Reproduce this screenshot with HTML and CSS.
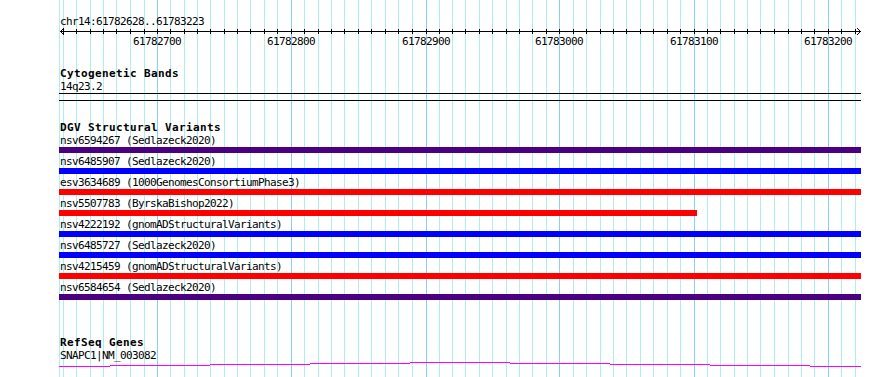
FILE: index.html
```html
<!DOCTYPE html>
<html>
<head>
<meta charset="utf-8">
<title>GBrowse region</title>
<link rel="stylesheet" href="styles.css">
</head>
<body>
<div class="panel">
  <svg class="grid" width="890" height="377" viewBox="0 0 890 377" shape-rendering="crispEdges">
    <g class="minor">
      <rect x="59" y="0" width="1" height="377"/>
      <rect x="63" y="0" width="1" height="377"/><rect x="76" y="0" width="1" height="377"/><rect x="90" y="0" width="1" height="377"/><rect x="103" y="0" width="1" height="377"/><rect x="116" y="0" width="1" height="377"/><rect x="130" y="0" width="1" height="377"/><rect x="144" y="0" width="1" height="377"/>
      <rect x="170" y="0" width="1" height="377"/><rect x="184" y="0" width="1" height="377"/><rect x="197" y="0" width="1" height="377"/><rect x="210" y="0" width="1" height="377"/><rect x="224" y="0" width="1" height="377"/><rect x="237" y="0" width="1" height="377"/><rect x="250" y="0" width="1" height="377"/><rect x="264" y="0" width="1" height="377"/><rect x="277" y="0" width="1" height="377"/>
      <rect x="304" y="0" width="1" height="377"/><rect x="318" y="0" width="1" height="377"/><rect x="331" y="0" width="1" height="377"/><rect x="344" y="0" width="1" height="377"/><rect x="358" y="0" width="1" height="377"/><rect x="371" y="0" width="1" height="377"/><rect x="385" y="0" width="1" height="377"/><rect x="398" y="0" width="1" height="377"/><rect x="412" y="0" width="1" height="377"/>
      <rect x="439" y="0" width="1" height="377"/><rect x="452" y="0" width="1" height="377"/><rect x="465" y="0" width="1" height="377"/><rect x="479" y="0" width="1" height="377"/><rect x="492" y="0" width="1" height="377"/><rect x="506" y="0" width="1" height="377"/><rect x="519" y="0" width="1" height="377"/><rect x="532" y="0" width="1" height="377"/><rect x="546" y="0" width="1" height="377"/>
      <rect x="573" y="0" width="1" height="377"/><rect x="586" y="0" width="1" height="377"/><rect x="600" y="0" width="1" height="377"/><rect x="613" y="0" width="1" height="377"/><rect x="626" y="0" width="1" height="377"/><rect x="640" y="0" width="1" height="377"/><rect x="653" y="0" width="1" height="377"/><rect x="667" y="0" width="1" height="377"/><rect x="680" y="0" width="1" height="377"/>
      <rect x="707" y="0" width="1" height="377"/><rect x="720" y="0" width="1" height="377"/><rect x="734" y="0" width="1" height="377"/><rect x="747" y="0" width="1" height="377"/><rect x="760" y="0" width="1" height="377"/><rect x="774" y="0" width="1" height="377"/><rect x="788" y="0" width="1" height="377"/><rect x="801" y="0" width="1" height="377"/><rect x="814" y="0" width="1" height="377"/>
      <rect x="841" y="0" width="1" height="377"/><rect x="855" y="0" width="1" height="377"/>
    </g>
    <g class="major">
      <rect x="157" y="0" width="1" height="377"/><rect x="291" y="0" width="1" height="377"/><rect x="426" y="0" width="1" height="377"/><rect x="559" y="0" width="1" height="377"/><rect x="694" y="0" width="1" height="377"/><rect x="828" y="0" width="1" height="377"/>
    </g>
  </svg>

  <div class="tracks">
    <section class="ruler">
      <div class="label">chr14:61782628..61783223</div>
      <svg class="axis" width="802" height="7" viewBox="0 0 802 7" shape-rendering="crispEdges">
        <rect x="1" y="3" width="801" height="1"/>
        <rect x="2" y="2" width="1" height="1"/><rect x="3" y="1" width="1" height="1"/><rect x="4" y="0" width="1" height="1"/>
        <rect x="2" y="4" width="1" height="1"/><rect x="3" y="5" width="1" height="1"/><rect x="4" y="6" width="1" height="1"/>
        <rect x="800" y="2" width="1" height="1"/><rect x="799" y="1" width="1" height="1"/><rect x="798" y="0" width="1" height="1"/>
        <rect x="800" y="4" width="1" height="1"/><rect x="799" y="5" width="1" height="1"/><rect x="798" y="6" width="1" height="1"/>
        <g class="ticks">
          <rect x="4" y="1" width="1" height="5"/><rect x="17" y="1" width="1" height="5"/><rect x="31" y="1" width="1" height="5"/><rect x="44" y="1" width="1" height="5"/><rect x="57" y="1" width="1" height="5"/><rect x="71" y="1" width="1" height="5"/><rect x="85" y="1" width="1" height="5"/><rect x="98" y="1" width="1" height="5"/><rect x="111" y="1" width="1" height="5"/><rect x="125" y="1" width="1" height="5"/>
          <rect x="138" y="1" width="1" height="5"/><rect x="151" y="1" width="1" height="5"/><rect x="165" y="1" width="1" height="5"/><rect x="178" y="1" width="1" height="5"/><rect x="191" y="1" width="1" height="5"/><rect x="205" y="1" width="1" height="5"/><rect x="218" y="1" width="1" height="5"/><rect x="232" y="1" width="1" height="5"/><rect x="245" y="1" width="1" height="5"/><rect x="259" y="1" width="1" height="5"/>
          <rect x="272" y="1" width="1" height="5"/><rect x="285" y="1" width="1" height="5"/><rect x="299" y="1" width="1" height="5"/><rect x="312" y="1" width="1" height="5"/><rect x="326" y="1" width="1" height="5"/><rect x="339" y="1" width="1" height="5"/><rect x="353" y="1" width="1" height="5"/><rect x="367" y="1" width="1" height="5"/><rect x="380" y="1" width="1" height="5"/><rect x="393" y="1" width="1" height="5"/>
          <rect x="406" y="1" width="1" height="5"/><rect x="420" y="1" width="1" height="5"/><rect x="433" y="1" width="1" height="5"/><rect x="447" y="1" width="1" height="5"/><rect x="460" y="1" width="1" height="5"/><rect x="473" y="1" width="1" height="5"/><rect x="487" y="1" width="1" height="5"/><rect x="500" y="1" width="1" height="5"/><rect x="514" y="1" width="1" height="5"/><rect x="527" y="1" width="1" height="5"/>
          <rect x="541" y="1" width="1" height="5"/><rect x="554" y="1" width="1" height="5"/><rect x="567" y="1" width="1" height="5"/><rect x="581" y="1" width="1" height="5"/><rect x="594" y="1" width="1" height="5"/><rect x="608" y="1" width="1" height="5"/><rect x="621" y="1" width="1" height="5"/><rect x="635" y="1" width="1" height="5"/><rect x="648" y="1" width="1" height="5"/><rect x="661" y="1" width="1" height="5"/>
          <rect x="675" y="1" width="1" height="5"/><rect x="688" y="1" width="1" height="5"/><rect x="701" y="1" width="1" height="5"/><rect x="715" y="1" width="1" height="5"/><rect x="729" y="1" width="1" height="5"/><rect x="742" y="1" width="1" height="5"/><rect x="755" y="1" width="1" height="5"/><rect x="769" y="1" width="1" height="5"/><rect x="782" y="1" width="1" height="5"/><rect x="796" y="1" width="1" height="5"/>
        </g>
      </svg>
      <div class="scale">
        <span class="tick-label" style="left:74px">61782700</span>
        <span class="tick-label" style="left:208px">61782800</span>
        <span class="tick-label" style="left:343px">61782900</span>
        <span class="tick-label" style="left:476px">61783000</span>
        <span class="tick-label" style="left:611px">61783100</span>
        <span class="tick-label" style="left:745px">61783200</span>
      </div>
    </section>

    <section class="track track-cyto">
      <h2 class="track-title">Cytogenetic Bands</h2>
      <div class="label">14q23.2</div>
      <div class="ideogram"></div>
    </section>

    <section class="track track-dgv">
      <h2 class="track-title">DGV Structural Variants</h2>
      <div class="feature"><div class="label">nsv6594267 (Sedlazeck2020)</div><div class="bar bar-purple"></div></div>
      <div class="feature"><div class="label">nsv6485907 (Sedlazeck2020)</div><div class="bar bar-blue"></div></div>
      <div class="feature"><div class="label">esv3634689 (1000GenomesConsortiumPhase3)</div><div class="bar bar-red"></div></div>
      <div class="feature"><div class="label">nsv5507783 (ByrskaBishop2022)</div><div class="bar bar-red" style="width:638px"></div></div>
      <div class="feature"><div class="label">nsv4222192 (gnomADStructuralVariants)</div><div class="bar bar-blue"></div></div>
      <div class="feature"><div class="label">nsv6485727 (Sedlazeck2020)</div><div class="bar bar-blue"></div></div>
      <div class="feature"><div class="label">nsv4215459 (gnomADStructuralVariants)</div><div class="bar bar-red"></div></div>
      <div class="feature"><div class="label">nsv6584654 (Sedlazeck2020)</div><div class="bar bar-purple"></div></div>
    </section>

    <section class="track track-refseq">
      <h2 class="track-title">RefSeq Genes</h2>
      <div class="label">SNAPC1|NM_003082</div>
      <svg class="gene" width="802" height="5" viewBox="0 0 802 5" shape-rendering="crispEdges">
        <rect x="0" y="4" width="51" height="1"/>
        <rect x="51" y="3" width="100" height="1"/>
        <rect x="151" y="2" width="100" height="1"/>
        <rect x="251" y="1" width="100" height="1"/>
        <rect x="351" y="0" width="100" height="1"/>
        <rect x="451" y="1" width="100" height="1"/>
        <rect x="551" y="2" width="100" height="1"/>
        <rect x="651" y="3" width="100" height="1"/>
        <rect x="751" y="4" width="51" height="1"/>
      </svg>
    </section>
  </div>
</div>
</body>
</html>
```

FILE: styles.css
```css
* {
  box-sizing: border-box;
}

html, body {
  margin: 0;
  padding: 0;
  background: #ffffff;
}

.panel {
  position: relative;
  width: 890px;
  height: 377px;
  overflow: hidden;
  background: #ffffff;
  color: #000000;
  font-family: "DejaVu Sans Mono", "Liberation Mono", monospace;
}

.grid {
  position: absolute;
  left: 0;
  top: 0;
  display: block;
}

.grid .minor {
  fill: #afeeee;
}

.grid .major {
  fill: #87cefa;
}

.tracks {
  position: relative;
  display: flex;
  flex-direction: column;
  padding-left: 59px;
  padding-top: 15px;
  width: 890px;
}

.label {
  font-size: 11px;
  line-height: 13px;
  height: 13px;
  letter-spacing: -0.62px;
  padding-left: 1px;
  white-space: nowrap;
}

.ruler {
  display: flex;
  flex-direction: column;
}

.axis {
  display: block;
  fill: #000000;
}

.scale {
  position: relative;
  height: 13px;
  width: 802px;
}

.tick-label {
  position: absolute;
  top: 0;
  font-size: 11px;
  line-height: 13px;
  letter-spacing: -0.62px;
  white-space: nowrap;
}

.track {
  display: flex;
  flex-direction: column;
  width: 802px;
}

.track-title {
  margin: 0;
  font-size: 11px;
  font-weight: bold;
  line-height: 12px;
  height: 12px;
  letter-spacing: 0.38px;
  padding-left: 1px;
  white-space: nowrap;
}

.track-cyto {
  margin-top: 20px;
}

.ideogram {
  width: 802px;
  height: 8px;
  border-top: 1px solid #000000;
  border-bottom: 1px solid #000000;
}

.track-dgv {
  margin-top: 21px;
}

.feature {
  display: flex;
  flex-direction: column;
  margin-bottom: 2px;
}

.bar {
  width: 802px;
  height: 6px;
}

.bar-purple {
  background: #4b0082;
}

.bar-blue {
  background: #0000ff;
}

.bar-red {
  background: #ff0000;
}

.track-refseq {
  margin-top: 35px;
}

.gene {
  display: block;
  fill: #ff00ff;
}
```
